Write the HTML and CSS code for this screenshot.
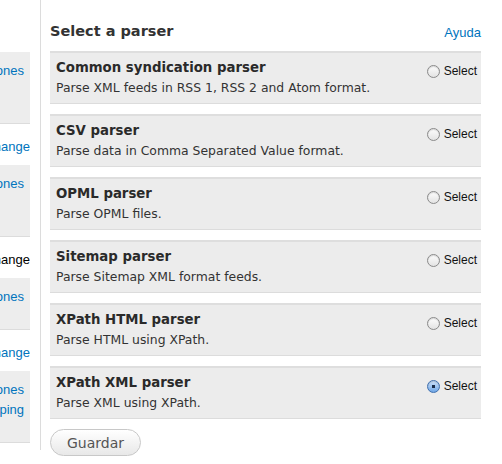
FILE: index.html
```html
<!DOCTYPE html>
<html>
<head>
<meta charset="utf-8">
<link rel="stylesheet" href="styles.css">
</head>
<body>
<div class="page">
  <aside class="side">
    <div class="side-inner">
      <div class="sbox sbox-tall"><a class="slink">Opciones</a></div>
      <div class="sline"><a class="slink">Change</a></div>
      <div class="sbox sbox-tall"><a class="slink">Opciones</a></div>
      <div class="sline"><span class="stext">Change</span></div>
      <div class="sbox sbox-short"><a class="slink">Opciones</a></div>
      <div class="sline"><a class="slink">Change</a></div>
      <div class="sbox sbox-tall"><a class="slink">Opciones</a><a class="slink">Mapping</a></div>
    </div>
  </aside>
  <main class="main">
    <div class="head">
      <h2 class="title">Select a parser</h2>
      <a class="help">Ayuda</a>
    </div>
    <div class="item">
      <div class="item-text">
        <div class="item-name">Common syndication parser</div>
        <div class="item-desc">Parse XML feeds in RSS 1, RSS 2 and Atom format.</div>
      </div>
      <label class="pick"><span class="radio"></span>Select</label>
    </div>
    <div class="item">
      <div class="item-text">
        <div class="item-name">CSV parser</div>
        <div class="item-desc">Parse data in Comma Separated Value format.</div>
      </div>
      <label class="pick"><span class="radio"></span>Select</label>
    </div>
    <div class="item">
      <div class="item-text">
        <div class="item-name">OPML parser</div>
        <div class="item-desc">Parse OPML files.</div>
      </div>
      <label class="pick"><span class="radio"></span>Select</label>
    </div>
    <div class="item">
      <div class="item-text">
        <div class="item-name">Sitemap parser</div>
        <div class="item-desc">Parse Sitemap XML format feeds.</div>
      </div>
      <label class="pick"><span class="radio"></span>Select</label>
    </div>
    <div class="item">
      <div class="item-text">
        <div class="item-name">XPath HTML parser</div>
        <div class="item-desc">Parse HTML using XPath.</div>
      </div>
      <label class="pick"><span class="radio"></span>Select</label>
    </div>
    <div class="item">
      <div class="item-text">
        <div class="item-name">XPath XML parser</div>
        <div class="item-desc">Parse XML using XPath.</div>
      </div>
      <label class="pick"><span class="radio radio-on"></span>Select</label>
    </div>
    <button class="save">Guardar</button>
  </main>
</div>
</body>
</html>
```
FILE: styles.css
```css
html, body {
  margin: 0;
  padding: 0;
  background: #fff;
}
.page {
  display: flex;
  align-items: flex-start;
  width: 502px;
  height: 464px;
  overflow: hidden;
}
.side {
  width: 30px;
  flex: none;
  overflow: hidden;
  padding-top: 52px;
}
.side-inner {
  width: 200px;
  margin-left: -170px;
  font-family: "Liberation Sans", Arial, sans-serif;
  font-size: 13px;
  line-height: 20px;
}
.sbox {
  background: #ededed;
  border-bottom: 1px solid #dcdcdc;
  box-sizing: border-box;
  display: flex;
  flex-direction: column;
  align-items: flex-end;
  padding: 9px 6px 0 0;
}
.sbox-tall { height: 72px; }
.sbox-short { height: 52px; }
.sline {
  height: 41px;
  box-sizing: border-box;
  padding-top: 13px;
  display: flex;
  justify-content: flex-end;
  padding-right: 0;
}
.slink { color: #0074bd; text-decoration: none; }
.stext { color: #000; }
.main {
  flex: none;
  width: 431px;
  margin-left: 10px;
  border-left: 1px solid #dcdcdc;
  padding-left: 9px;
  height: 450px;
  font-family: "DejaVu Sans", "Lucida Grande", sans-serif;
  color: #333;
}
.head {
  display: flex;
  justify-content: space-between;
  align-items: flex-end;
  height: 51px;
}
.title {
  margin: 0 0 10px 0;
  font-size: 14.5px;
  font-weight: bold;
  line-height: 20px;
  color: #333;
}
.help {
  font-family: "Liberation Sans", Arial, sans-serif;
  font-size: 13px;
  line-height: 20px;
  color: #0074bd;
  margin-bottom: 8px;
}
.item {
  display: flex;
  justify-content: space-between;
  align-items: flex-start;
  background: #ececec;
  border-top: 2px solid #dedede;
  border-bottom: 1px solid #dcdcdc;
  padding: 5px 4px 5px 6px;
  margin-bottom: 10px;
}
.item-name {
  font-size: 13.3px;
  font-weight: bold;
  line-height: 20px;
  color: #2a2a2a;
}
.item-desc {
  font-size: 12.4px;
  line-height: 20px;
  color: #333;
}
.pick {
  display: flex;
  align-items: center;
  gap: 4px;
  font-family: "Liberation Sans", Arial, sans-serif;
  font-size: 12px;
  color: #111;
  margin-top: 6px;
}
.radio {
  width: 11px;
  height: 11px;
  border-radius: 50%;
  border: 1px solid #8a8a8a;
  background: linear-gradient(#fdfdfd, #e3e3e3);
  box-shadow: inset 0 1px 1px rgba(0,0,0,0.15);
  display: inline-block;
}
.radio-on {
  border-color: #3f6fae;
  background: radial-gradient(circle at 50% 50%, #1a2d4a 0 1.6px, transparent 2px), linear-gradient(#cfe3fb, #6fa6e6);
}
.save {
  width: 91px;
  height: 27px;
  border-radius: 14px;
  border: 1px solid #c8c8c8;
  background: linear-gradient(#ffffff, #e8e8e8);
  font-family: "DejaVu Sans", "Lucida Grande", sans-serif;
  font-size: 14px;
  color: #555;
  padding: 0;
}
```
